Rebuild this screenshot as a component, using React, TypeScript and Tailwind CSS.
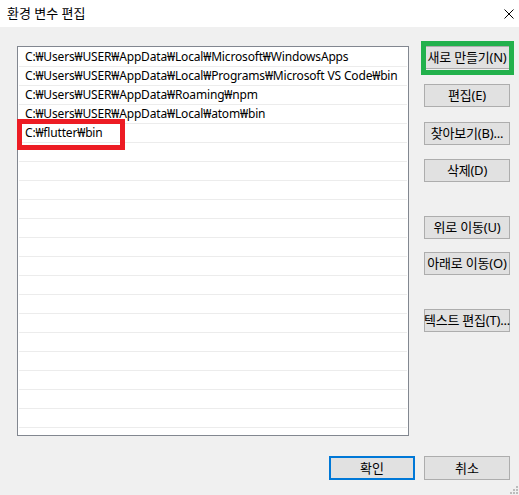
import React from "react";

const paths = [
  "C:₩Users₩USER₩AppData₩Local₩Microsoft₩WindowsApps",
  "C:₩Users₩USER₩AppData₩Local₩Programs₩Microsoft VS Code₩bin",
  "C:₩Users₩USER₩AppData₩Roaming₩npm",
  "C:₩Users₩USER₩AppData₩Local₩atom₩bin",
  "C:₩flutter₩bin",
];

const sideButtons = [
  { label: "새로 만들기(N)", mt: "mt-0" },
  { label: "편집(E)", mt: "mt-[15px]" },
  { label: "찾아보기(B)...", mt: "mt-[15px]" },
  { label: "삭제(D)", mt: "mt-[14px]" },
  { label: "위로 이동(U)", mt: "mt-[34px]" },
  { label: "아래로 이동(O)", mt: "mt-[13px]" },
  { label: "텍스트 편집(T)...", mt: "mt-[34px]" },
];

const font = { fontFamily: '"Noto Sans", "Noto Sans CJK KR", sans-serif' };

export default function App() {
  const rows = Array.from({ length: 20 }, (_, i) => paths[i] ?? "");

  return (
    <div
      className="relative w-[519px] h-[495px] flex flex-col bg-[#f0f0f0] text-[12px] text-black overflow-hidden"
      style={font}
    >
      {/* Title bar */}
      <div className="h-[27px] bg-white flex items-center justify-between pl-[7px] pr-[5px]">
        <span className="leading-none text-[13px]">환경 변수 편집</span>
        <svg width="10" height="10" viewBox="0 0 10 10">
          <path d="M0.5 0.5 L9.5 9.5 M9.5 0.5 L0.5 9.5" stroke="#000" strokeWidth="1" />
        </svg>
      </div>

      {/* Body */}
      <div className="flex pt-[19px] pl-[17px]">
        <div className="w-[392px] h-[390px] bg-white border border-[#828790] pt-[1px] px-[1px] overflow-hidden">
          {rows.map((p, i) => (
            <div
              key={i}
              className="h-[19px] border-b border-[#ececec] pl-[6px] flex items-center whitespace-nowrap leading-none tracking-[-0.16px]"
            >
              {p}
            </div>
          ))}
        </div>

        <div className="ml-[15px] w-[86px] flex flex-col">
          {sideButtons.map((b) => (
            <button
              key={b.label}
              className={`${b.mt} h-[23px] w-[86px] bg-[#e1e1e1] border border-[#adadad] flex items-center justify-center whitespace-nowrap leading-none text-[13px] tracking-[-0.2px]`}
            >
              {b.label}
            </button>
          ))}
        </div>
      </div>

      {/* Bottom buttons */}
      <div className="flex justify-end gap-[9px] mt-[20px] pr-[9px]">
        <button className="h-[24px] w-[86px] bg-[#e1e1e1] border-2 border-[#0078d7] flex items-center justify-center leading-none text-[13px]">
          확인
        </button>
        <button className="h-[24px] w-[86px] bg-[#e1e1e1] border border-[#adadad] flex items-center justify-center leading-none text-[13px]">
          취소
        </button>
      </div>

      {/* Resize grip */}
      <svg width="8" height="8" viewBox="0 0 8 8" className="absolute right-[1px] bottom-[1px]">
        <rect x="6" y="0" width="2" height="2" fill="#bcbcbc" />
        <rect x="3" y="3" width="2" height="2" fill="#bcbcbc" />
        <rect x="6" y="3" width="2" height="2" fill="#bcbcbc" />
        <rect x="0" y="6" width="2" height="2" fill="#bcbcbc" />
        <rect x="3" y="6" width="2" height="2" fill="#bcbcbc" />
        <rect x="6" y="6" width="2" height="2" fill="#bcbcbc" />
      </svg>

      {/* Annotation boxes */}
      <div className="absolute left-[17px] top-[119px] w-[108px] h-[31px] border-[5px] border-[#ed1c24]" />
      <div className="absolute left-[421px] top-[41px] w-[93px] h-[34px] border-[5px] border-[#22b14c]" />
    </div>
  );
}
